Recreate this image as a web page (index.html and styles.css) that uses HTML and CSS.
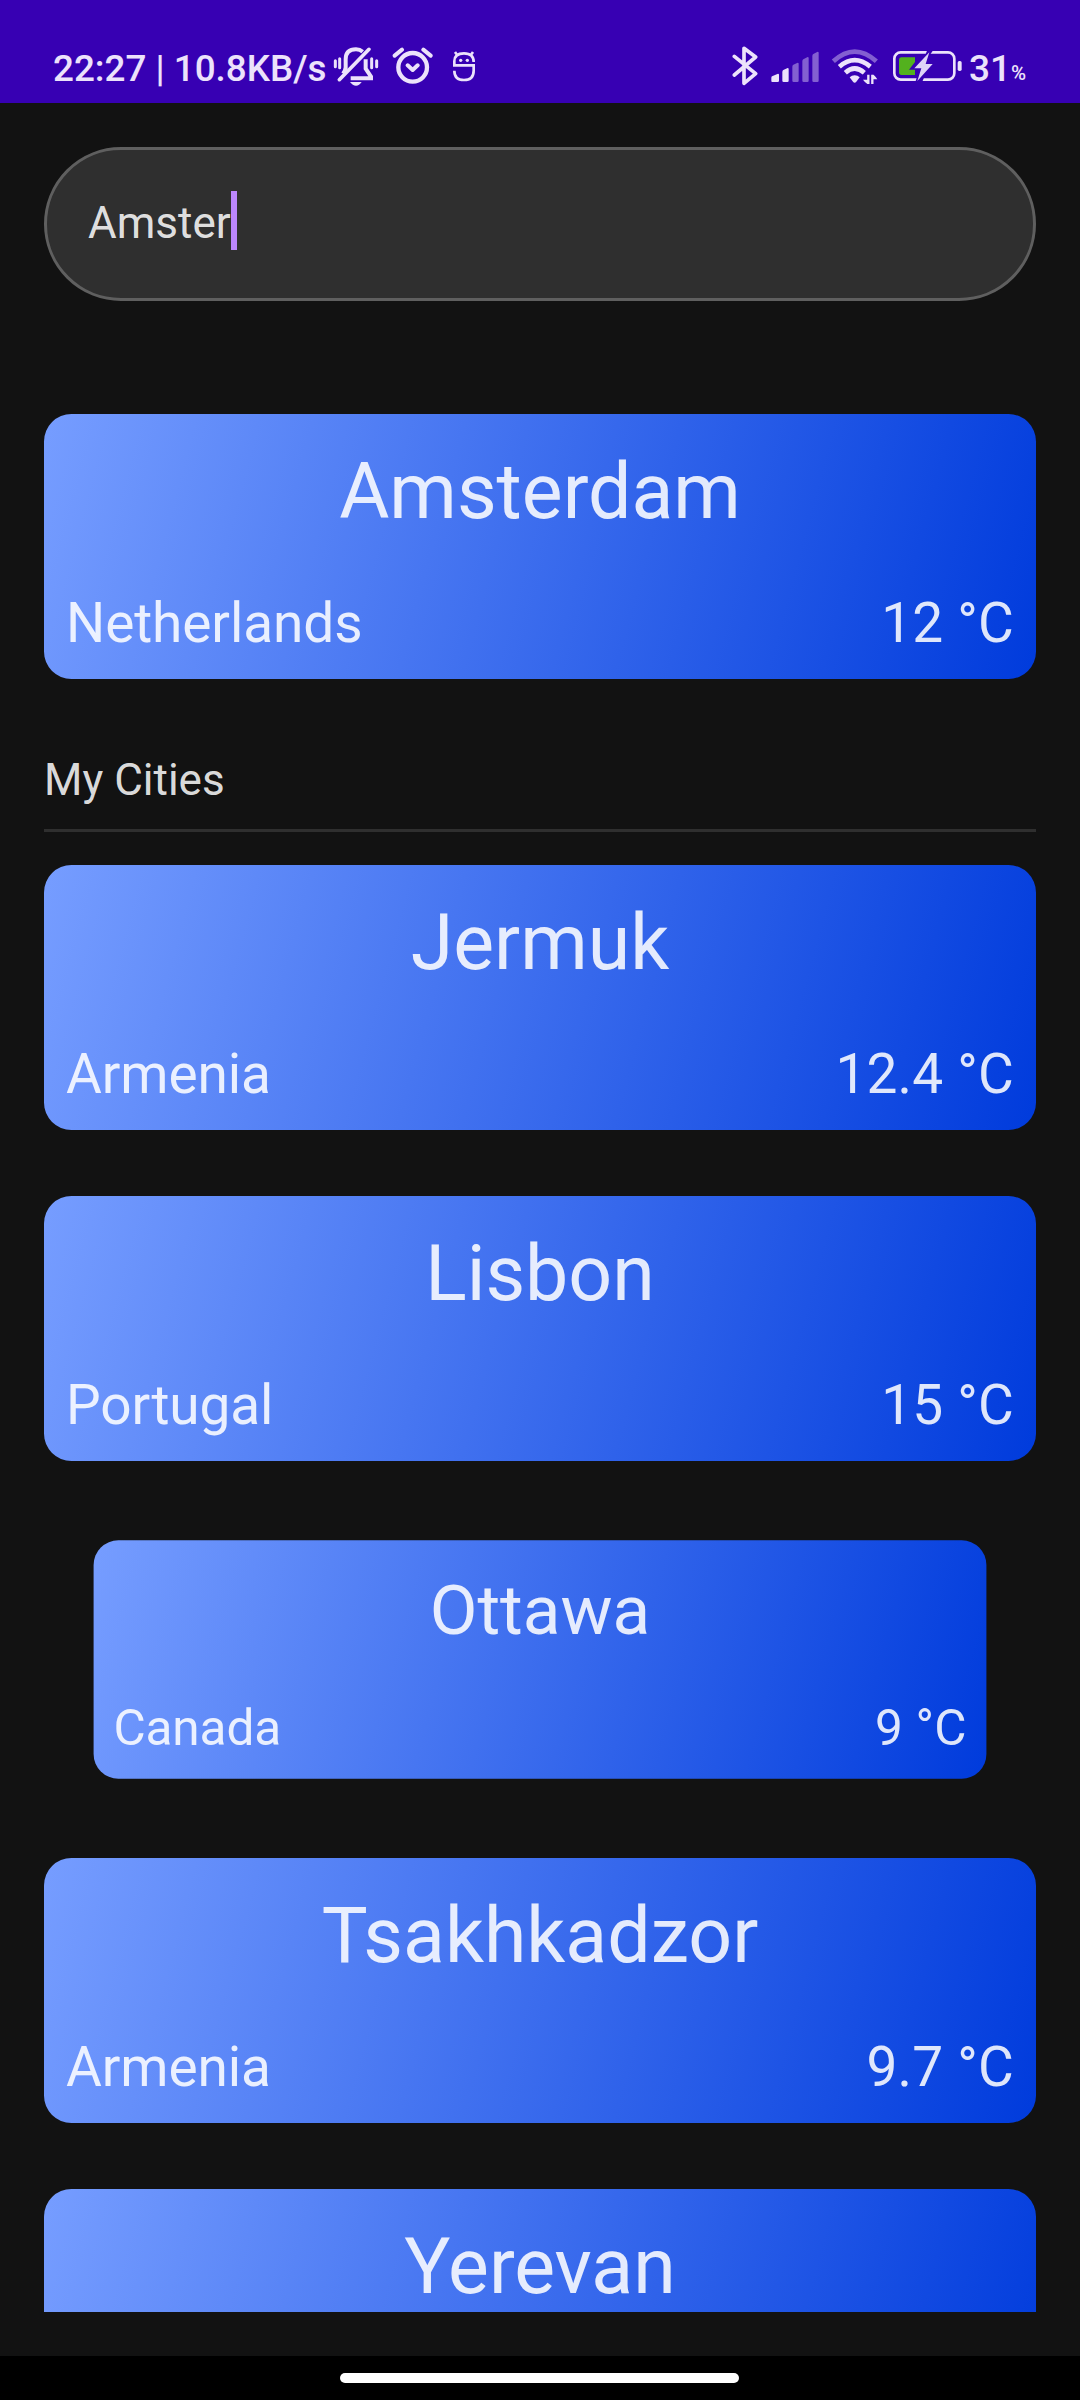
FILE: index.html
```html
<!DOCTYPE html>
<html lang="en">
<head>
<meta charset="utf-8">
<title>Weather cities</title>
<link rel="stylesheet" href="styles.css">
</head>
<body>
<header class="status">
  <div class="status-left">
    <span class="status-clock">22:27 | 10.8KB/s</span>
    <svg class="icon" width="47" height="50" viewBox="39 30 141 150" fill="none" stroke="#ece2fb" stroke-linecap="round">
      <path d="M46 92v18M59 86v27M155 86v27M170 92v18" stroke-width="9"/>
      <path d="M77 118V88q0-30 31-30 12 0 20 7M77 112q0 8-8 19M137 88v28l16 24v5H92" stroke-width="12" stroke-linecap="butt"/>
      <path d="M58 149L147 58" stroke-width="11"/>
      <path d="M90 156h35q-7 11-17 11t-18-11z" fill="#ece2fb" stroke="none"/>
    </svg>
    <svg class="icon alarm" width="41" height="50" viewBox="216 30 123 150" fill="none" stroke="#ece2fb" stroke-width="12" stroke-linecap="round" stroke-linejoin="round">
      <circle cx="278" cy="112" r="43" stroke-width="13"/>
      <path d="M224 77l22-18M332 77l-22-18M263 106l15 14 15-14"/>
    </svg>
    <svg class="icon debug" width="24" height="50" viewBox="396 30 72 150" fill="none" stroke="#ece2fb" stroke-width="8">
      <path d="M403 96V94Q403 70 432 70T461 96M403 92V106H461V122Q461 150 432 150T403 122M405 66l8 11M459 66l-8 11"/>
      <circle cx="422" cy="91" r="5" fill="#ece2fb" stroke="none"/>
      <circle cx="442" cy="91" r="5" fill="#ece2fb" stroke="none"/>
    </svg>
  </div>
  <div class="status-right">
    <svg class="icon" width="26" height="50" viewBox="66 30 78 150" fill="none" stroke="#ece2fb" stroke-width="11" stroke-linecap="round" stroke-linejoin="round">
      <path d="M73 79l64 52-35 29V55l35 26-64 54"/>
    </svg>
    <svg class="icon signal" width="50" height="50" viewBox="180 30 150 150" fill="#ece2fb">
      <path d="M184 154v-11q0-4 4-5l16-7q3 0 3 3v18q0 4-4 4h-16q-3 0-3-2zM217 152v-26q0-4 3-6l13-6q3 0 3 3v35q0 4-4 4h-11q-4 0-4-4z"/>
      <path fill-opacity=".42" d="M247 152v-42q0-4 3-6l13-6q3 0 3 3v51q0 4-4 4h-11q-4 0-4-4zM277 152V94q0-4 3-6l13-7q3 0 3 3v68q0 4-4 4h-11q-4 0-4-4zM307 152V78q0-4 3-6l13-7q3 0 3 3v84q0 4-4 4h-11q-4 0-4-4z"/>
    </svg>
    <svg class="icon wifi" width="47" height="50" viewBox="363 30 141 150" fill="none" stroke="#ece2fb" stroke-width="14">
      <path d="M370 94q64-58 129 0" stroke-opacity=".42"/>
      <path d="M388 110q46-39 93 0"/>
      <path d="M406 128q28-25 57 0"/>
      <path d="M434 136q9 0 15 6l-10 13q-5 6-10 0l-10-13q6-6 15-6z" fill="#ece2fb" stroke="none"/>
      <path d="M475 134v28M487 134v28" stroke-width="7"/>
      <path d="M459 149h15v13q-4 0-15-13zM488 134v14h14q-8-14-14-14z" fill="#ece2fb" stroke="none"/>
    </svg>
    <svg class="icon battery" width="71" height="50" viewBox="66 30 213 150">
      <rect x="73" y="67" width="180" height="82" rx="19" fill="none" stroke="#ece2fb" stroke-width="8"/>
      <path d="M172 60h18l-10 14h-14zM140 143h22l-6 14h-20z" fill="#3700b3"/>
      <rect x="263" y="93" width="12" height="30" rx="5" fill="#ece2fb"/>
      <path d="M95 82h40v14l-18 23h18v16H95q-8 0-8-8V90q0-8 8-8z" fill="#53b11e"/>
      <path d="M178 67L133 115h21l-12 38 46-51h-21z" fill="#ded2f7"/>
    </svg>
    <span class="level">31</span><span class="percent">%</span>
  </div>
</header>
<main class="screen">
  <div class="search"><span>Amster</span><i class="caret"></i></div>
  <article class="card result">
    <h2 class="city">Amsterdam</h2>
    <div class="details"><span>Netherlands</span><span class="temp">12 °C</span></div>
  </article>
  <h1 class="heading">My Cities</h1>
  <section class="list">
    <article class="card">
      <h2 class="city">Jermuk</h2>
      <div class="details"><span>Armenia</span><span class="temp">12.4 °C</span></div>
    </article>
    <article class="card">
      <h2 class="city">Lisbon</h2>
      <div class="details"><span>Portugal</span><span class="temp">15 °C</span></div>
    </article>
    <article class="card pressed">
      <h2 class="city">Ottawa</h2>
      <div class="details"><span>Canada</span><span class="temp">9 °C</span></div>
    </article>
    <article class="card">
      <h2 class="city">Tsakhkadzor</h2>
      <div class="details"><span>Armenia</span><span class="temp">9.7 °C</span></div>
    </article>
    <article class="card">
      <h2 class="city">Yerevan</h2>
    </article>
  </section>
</main>
<footer class="navbar"><div class="handle"></div></footer>
</body>
</html>
```
FILE: styles.css
```css
* { box-sizing: border-box; }

body {
  margin: 0;
  width: 1080px;
  height: 2400px;
  display: flex;
  flex-direction: column;
  overflow: hidden;
  background: #121212;
  color: rgba(255, 255, 255, .87);
  font-family: Roboto, "Noto Sans", sans-serif;
}

h1, h2 { margin: 0; font-weight: 400; }

/* System status bar */
.status {
  height: 103px;
  flex: none;
  display: flex;
  justify-content: space-between;
  padding: 40px 50px 0 53px;
  background: #3700b3;
  color: #ece2fb;
  font-size: 36.8px;
  font-weight: 500;
  line-height: 57px;
  white-space: nowrap;
}
.status-left, .status-right { display: flex; }
.status-clock { width: 280px; }
.icon { display: block; flex: none; }
.alarm { margin-left: 12px; }
.debug { margin-left: 19px; }
.status-right { width: 298px; }
.signal { margin-left: 12px; }
.wifi { margin-left: 11px; }
.battery { margin-left: 14px; }
.level { margin-left: 6px; font-size: 37px; }
.percent { font-size: 20.5px; line-height: 66px; }

.screen {
  height: 2253px;
  flex: none;
  display: flex;
  flex-direction: column;
  padding: 44px 44px;
}

.search {
  height: 154px;
  flex: none;
  display: flex;
  align-items: flex-start;
  padding: 41px 41px;
  border: 3px solid #5f5f5f;
  border-radius: 77px;
  background: #2f2f2f;
  font-size: 44px;
  line-height: 64px;
}
.caret { width: 6px; height: 59px; background: #bb86fc; }

/* City cards */
.card {
  height: 265px;
  flex: none;
  display: flex;
  flex-direction: column;
  justify-content: space-between;
  padding: 33px 22px 23px;
  border-radius: 27.5px;
  background: linear-gradient(104.96deg, #769dff, #003bdc);
}
.result { margin-top: 113px; }
.pressed { transform: scale(.9); }
.city { font-size: 77px; line-height: 90px; text-align: center; }
.details {
  display: flex;
  justify-content: space-between;
  font-size: 55px;
  line-height: 66px;
  letter-spacing: -.1px;
}
.temp { letter-spacing: .2px; }

.heading {
  height: 153px;
  flex: none;
  padding-top: 72px;
  border-bottom: 3px solid #2f2f2f;
  font-size: 44px;
  line-height: 58px;
}
.list {
  height: 1447px;
  flex: none;
  display: flex;
  flex-direction: column;
  gap: 66px;
  margin-top: 33px;
  overflow: hidden;
}

.navbar {
  flex: 1;
  display: flex;
  justify-content: center;
  padding: 17px 1px 0 0;
  background: #000;
}
.handle { width: 399px; height: 10px; border-radius: 5px; background: #fff; }
```
